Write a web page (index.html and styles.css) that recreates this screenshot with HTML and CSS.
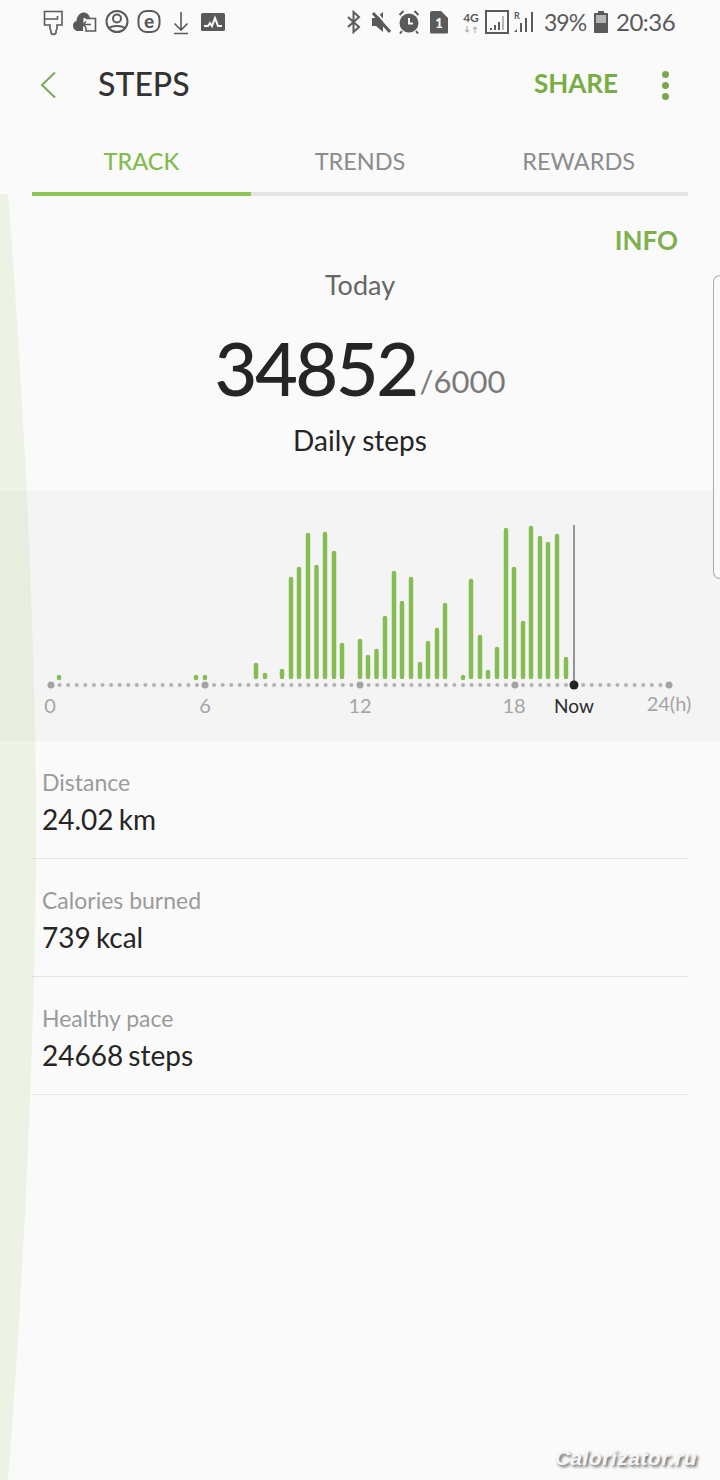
FILE: index.html
```html
<!DOCTYPE html>
<html lang="en">
<head>
  <meta charset="UTF-8" />
  <meta name="viewport" content="width=device-width, initial-scale=1" />
  <title>Steps</title>
  <link rel="stylesheet" href="styles.css">
</head>
<body>
  <div class="screen">
    <div class="status">
      <div class="status-left">
        <!-- brush -->
        <svg class="slot" viewBox="0 0 32 32"><path class="line thin" d="M7.500 5.500h17.500v13.500h-5v3.500c0 1-1 1.500-1 2.500v1.500c0 2.500-5 2.500-5 0V25c0-1-1-1.500-1-2.500V19H7.500zM7.500 13h13v-3"/></svg>
        <!-- cloud with file -->
        <svg class="slot" viewBox="0 0 32 32"><path class="fill" d="M14 25H9c-3 0-5-2.500-5-5.500 0-2.500 1.500-4 3.500-4.500C8 10 11 6.500 14.500 6.500c3.500 0 6 2.500 6.500 5.500h-6.500z"/><path class="line thin" d="M16.500 12.500h10v12.500h-9.500v-3.500"/><path class="line thin" d="M22 18.500h-8m3-3-3 3 3 3"/></svg>
        <!-- account -->
        <svg class="slot" viewBox="0 0 32 32"><circle class="line" cx="16" cy="15.500" r="10.500"/><circle class="line" cx="16" cy="12.500" r="4"/><path class="line" d="M8 22.500c2-3.500 14-3.500 16 0"/></svg>
        <!-- e store -->
        <svg class="slot" viewBox="0 0 32 32"><rect class="line" x="5.500" y="5" width="21" height="21" rx="8"/><text class="e-glyph" x="16" y="21.500" text-anchor="middle">e</text></svg>
        <!-- download -->
        <svg class="slot" viewBox="0 0 32 32"><path class="line thin" d="M16 6v18m-6.500-6.500L16 24l6.500-6.500M9 27.500h14"/></svg>
        <!-- activity -->
        <svg class="slot" viewBox="0 0 32 32"><rect class="fill" x="4" y="7" width="24" height="18" rx="1.500"/><path class="pulse" d="M7 20h4l2-3 2 3 3-8 3 8h4"/></svg>
      </div>
      <div class="status-right">
        <svg class="s-bt" viewBox="0 0 18 24"><path class="line" d="M3 7l11 10-5.500 5V2L14 7 3 17"/></svg>
        <svg class="s-mute" viewBox="0 0 20 24"><path class="fill" d="M1 8h4l7-6v20l-7-6H1z"/><path class="slash-gap" d="M4 1l17 19"/><path class="slash" d="M2 3l17 19"/></svg>
        <svg class="s-alarm" viewBox="0 0 22 24"><circle class="fill" cx="11" cy="13" r="9.500"/><path class="line" d="M1.500 5l4-4M20.500 5l-4-4M4 21l-2 2.500M18 21l2 2.500"/><path class="pulse" d="M11 8v5.500h4"/></svg>
        <svg class="s-sim" viewBox="0 0 20 24"><path class="fill" d="M3 1h9l7 7v14c0 1-.5 1.500-1.500 1.500h-15C1.500 23.500 1 23 1 22V3c0-1 .5-2 2-2z"/><text class="sim-num" x="10" y="18" text-anchor="middle">1</text></svg>
        <div class="net">
          <span class="net-4g">4G</span>
          <svg class="net-arrows" viewBox="0 0 16 7"><path class="arrow" d="M4 0v6M2 4l2 2 2-2M12 7V1M10 3l2-2 2 2"/></svg>
        </div>
        <svg class="s-box" viewBox="0 0 24 24"><rect class="line" x="1" y="1" width="22" height="22"/><path class="fill" d="M5 20v-2h2v2zM9 20v-5h2v5zM13 20v-8h2v8z"/><path class="fill light" d="M17 20V6h2v14z"/></svg>
        <svg class="s-roam" viewBox="0 0 22 24"><text class="roam-r" x="1" y="9">R</text><path class="fill" d="M1 22l3-3v3zM7 22v-9h2v9zM12 22V8h2v14zM18 22V2h2v20z"/></svg>
        <span class="s-text s-pct">39%</span>
        <svg class="s-batt" viewBox="0 0 14 22"><path class="fill" d="M4 0h6v2h3c.6 0 1 .4 1 1v18c0 .6-.4 1-1 1H1c-.6 0-1-.4-1-1V3c0-.6.4-1 1-1h3z"/><rect class="batt-empty" x="2" y="4" width="10" height="8"/></svg>
        <span class="s-text s-time">20:36</span>
      </div>
    </div>

    <div class="header">
      <svg class="back" viewBox="0 0 18 28"><path d="M16 1.500 3 14l13 12.500"/></svg>
      <div class="title">STEPS</div>
      <div class="share">SHARE</div>
      <div class="more"><span></span><span></span><span></span></div>
    </div>

    <div class="tabs">
      <div class="tab active">TRACK</div>
      <div class="tab">TRENDS</div>
      <div class="tab">REWARDS</div>
    </div>

    <div class="summary">
      <div class="info">INFO</div>
      <div class="today">Today</div>
      <div class="count"><span class="count-num">34852</span><span class="count-goal">/6000</span></div>
      <div class="daily">Daily steps</div>
    </div>

    <div class="chart">
      <svg class="chart-svg" viewBox="0 491 720 250">
        <path class="axis" d="M51 685H669"/>
        <circle class="tick" cx="51" cy="685" r="3.500"/>
        <circle class="tick" cx="205" cy="685" r="3.500"/>
        <circle class="tick" cx="360" cy="685" r="3.500"/>
        <circle class="tick" cx="515" cy="685" r="3.500"/>
        <circle class="tick" cx="669" cy="685" r="3.500"/>
        <path class="bars" d="M59 677V678M196 677V678M205 677V678M256 665V677M265 675V677M282 671V677M291 579V677M299 569V677M308 535V677M316.500 567V677M325 534V677M334 553V677M342 645V677M360 641V677M368 657V677M376.500 651V677M385 618V677M394 573V677M402 603V677M411 579V677M420 664V677M428 643V677M437 630V677M445 605V677M463 677V678M471 581V677M480 637V677M488 672V677M497 649V677M506 530V677M514 569V677M523 623V677M531 528V677M540 538V677M548 544V677M557 536V677M566 659V677"/>
        <path class="now-line" d="M574 525V685"/>
        <circle class="now-dot" cx="574" cy="685" r="4.500"/>
        <text class="lbl" x="50" y="713">0</text>
        <text class="lbl" x="205" y="713">6</text>
        <text class="lbl" x="360" y="713">12</text>
        <text class="lbl" x="514" y="713">18</text>
        <text class="lbl lbl-now" x="574" y="713">Now</text>
        <text class="lbl" x="669" y="711">24(h)</text>
      </svg>
    </div>

    <div class="stats">
      <div class="stat">
        <div class="stat-label">Distance</div>
        <div class="stat-value">24.02 km</div>
      </div>
      <div class="stat">
        <div class="stat-label">Calories burned</div>
        <div class="stat-value">739 kcal</div>
      </div>
      <div class="stat">
        <div class="stat-label">Healthy pace</div>
        <div class="stat-value">24668 steps</div>
      </div>
    </div>

    <!-- overlays: edge lighting arc, edge panel handle, watermark -->
    <svg class="edge-arc" viewBox="0 0 40 1286"><path d="M0 0H8C24 206 36 456 36 636C36 816 24 1086 8 1286H0Z"/></svg>
    <div class="edge-handle"></div>
    <div class="watermark">Calorizator.ru</div>
  </div>
</body>
</html>
```

FILE: styles.css
```css
/* Reset & base */
* {
  box-sizing: border-box;
}
body {
  margin: 0;
  background: #fafafa;
  font-family: Lato, "Noto Sans", sans-serif;
  color: #252525;
}
.screen {
  position: relative;
  width: 720px;
  height: 1480px;
  overflow: hidden;
  background: #fafafa;
}

/* Status bar */
.status {
  height: 44px;
  display: flex;
  justify-content: space-between;
  align-items: center;
  padding: 0 44px 0 37px;
}
.status-left,
.status-right {
  display: flex;
  align-items: center;
}
.slot {
  width: 32px;
  height: 32px;
}
.line {
  fill: none;
  stroke: #5a5a5a;
  stroke-width: 2;
}
.line.thin {
  stroke-width: 1.600;
}
.fill {
  fill: #5a5a5a;
}
.fill.light {
  fill: #b5b5b5;
}
.pulse {
  fill: none;
  stroke: #fafafa;
  stroke-width: 2;
}
.slash {
  stroke: #5a5a5a;
  stroke-width: 3;
}
.slash-gap {
  stroke: #fafafa;
  stroke-width: 2;
}
.e-glyph {
  font-size: 19px;
  font-weight: 900;
  fill: #5a5a5a;
}
.sim-num {
  font-size: 13px;
  font-weight: 900;
  fill: #fafafa;
}
.roam-r {
  font-size: 9px;
  font-weight: 700;
  fill: #5a5a5a;
}
.s-bt {
  width: 18px;
  height: 24px;
  margin-right: 8px;
}
.s-mute {
  width: 20px;
  height: 24px;
  margin-right: 7px;
}
.s-alarm {
  width: 22px;
  height: 24px;
  margin-right: 9px;
}
.s-sim {
  width: 20px;
  height: 24px;
  margin-right: 13px;
}
.net {
  width: 18px;
  margin-right: 5px;
  display: flex;
  flex-direction: column;
  align-items: center;
}
.net-4g {
  font-size: 12px;
  line-height: 12px;
  font-weight: 700;
  color: #5a5a5a;
}
.net-arrows {
  width: 16px;
  height: 7px;
  margin-top: 2px;
}
.arrow {
  fill: none;
  stroke: #b5b5b5;
  stroke-width: 1.200;
}
.s-box {
  width: 24px;
  height: 24px;
  margin-right: 4px;
}
.s-roam {
  width: 22px;
  height: 24px;
  margin-right: 9px;
}
.s-text {
  line-height: 30px;
  white-space: nowrap;
  color: #5a5a5a;
}
.s-pct {
  width: 42px;
  margin-right: 8px;
  font-size: 23px;
  letter-spacing: -1px;
}
.s-batt {
  width: 14px;
  height: 22px;
  margin-right: 8px;
}
.batt-empty {
  fill: #b5b5b5;
}
.s-time {
  width: 60px;
  font-size: 24px;
  letter-spacing: -0.5px;
}

/* Header */
.header {
  height: 82px;
  display: flex;
  align-items: center;
  padding-left: 39px;
}
.back {
  width: 18px;
  height: 28px;
  fill: none;
  stroke: #78a958;
  stroke-width: 2;
}
.title {
  margin: 0 0 4px 41px;
  font-size: 32px;
  font-weight: 500;
  color: #333;
}
.share {
  margin: 0 0 4px auto;
  font-size: 26px;
  font-weight: 700;
  color: #78ad45;
}
.more {
  width: 94px;
  margin-right: 8px;
  display: flex;
  flex-direction: column;
  align-items: center;
  gap: 4px;
}
.more span {
  width: 7px;
  height: 7px;
  border-radius: 50%;
  background: #7ba74f;
}

/* Tabs */
.tabs {
  height: 70px;
  margin: 0 32px;
  display: grid;
  grid-template-columns: repeat(3, 1fr);
}
.tab {
  display: flex;
  align-items: center;
  justify-content: center;
  padding-top: 4px;
  border-bottom: 4px solid #e4e4e4;
  font-size: 23.500px;
  color: #8c8c8c;
}
.tab.active {
  border-bottom-color: #8bc751;
  color: #83bb4e;
  font-weight: 500;
}

/* Today's count */
.summary {
  height: 295px;
  padding-top: 28px;
  display: flex;
  flex-direction: column;
  align-items: center;
}
.info {
  align-self: flex-end;
  margin-right: 42px;
  font-size: 26px;
  line-height: 32px;
  font-weight: 700;
  color: #7fb04d;
}
.today {
  margin-top: 12px;
  font-size: 27px;
  line-height: 34px;
  color: #666;
}
.count {
  height: 80px;
  margin-top: 26px;
  display: flex;
  align-items: flex-start;
  line-height: 80px;
}
.count-num {
  font-size: 74px;
  font-weight: 500;
  letter-spacing: -2.500px;
}
.count-goal {
  margin: 13px 0 0 3px;
  font-size: 31px;
  color: #7a7a7a;
}
.daily {
  margin-top: 14px;
  font-size: 28px;
  line-height: 36px;
}

/* Chart */
.chart {
  height: 250px;
  background: #f4f4f4;
}
.chart-svg {
  display: block;
  width: 720px;
  height: 250px;
}
.axis {
  fill: none;
  stroke: #b4b0b4;
  stroke-width: 4;
  stroke-linecap: round;
  stroke-dasharray: 0 8.583;
}
.tick {
  fill: #a5a2a5;
}
.bars {
  fill: none;
  stroke: #85bd52;
  stroke-width: 4.500;
  stroke-linecap: round;
}
.now-line {
  stroke: #77777c;
  stroke-width: 1.500;
}
.now-dot {
  fill: #222;
}
.lbl {
  font-size: 20px;
  text-anchor: middle;
  fill: #a5a5a5;
}
.lbl-now {
  font-size: 19px;
  fill: #2c2c2c;
}

/* Stats list */
.stats {
  margin: 0 32px;
}
.stat {
  height: 118px;
  padding: 26px 0 0 10px;
  border-bottom: 1px solid #e4e4e4;
}
.stat-label {
  font-size: 23px;
  line-height: 30px;
  color: #9a9a9a;
}
.stat-value {
  margin-top: 4px;
  font-size: 28px;
  line-height: 36px;
  word-spacing: -2px;
  color: #252525;
}

/* Overlays */
.edge-arc {
  position: absolute;
  left: 0;
  top: 194px;
  width: 40px;
  height: 1286px;
  fill: rgba(140, 195, 74, 0.12);
}
.edge-handle {
  position: absolute;
  right: 0;
  top: 275px;
  width: 7px;
  height: 304px;
  background: #fafafa;
  border: 1px solid #aaa;
  border-right: none;
  border-radius: 9px 0 0 9px;
}
.watermark {
  position: absolute;
  right: 23px;
  top: 1446px;
  font-family: "Liberation Sans", sans-serif;
  font-size: 21px;
  font-style: italic;
  font-weight: 700;
  letter-spacing: 0.500px;
  color: #f6f6f6;
  text-shadow: 2px 2px 3px #666;
}
```
